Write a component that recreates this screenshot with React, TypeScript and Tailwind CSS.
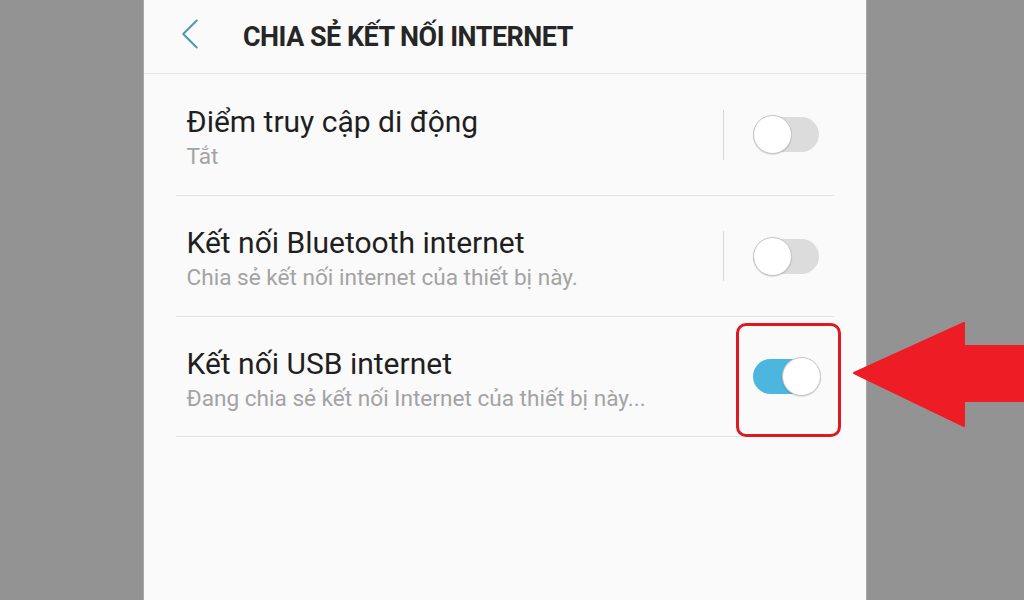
import { ChevronLeft } from "lucide-react";

interface TetherOption {
  id: string;
  title: string;
  subtitle: string;
  enabled: boolean;
  divider: boolean;
  height: string;
  highlighted?: boolean;
}

const options: TetherOption[] = [
  {
    id: "hotspot",
    title: "Điểm truy cập di động",
    subtitle: "Tắt",
    enabled: false,
    divider: true,
    height: "h-[122px]",
  },
  {
    id: "bluetooth",
    title: "Kết nối Bluetooth internet",
    subtitle: "Chia sẻ kết nối internet của thiết bị này.",
    enabled: false,
    divider: true,
    height: "h-[121px]",
  },
  {
    id: "usb",
    title: "Kết nối USB internet",
    subtitle: "Đang chia sẻ kết nối Internet của thiết bị này...",
    enabled: true,
    divider: false,
    height: "h-[120px]",
    highlighted: true,
  },
];

function Toggle({ on }: { on: boolean }) {
  return (
    <div className="relative w-[66px] h-[35px]">
      <div
        className={`absolute inset-0 rounded-full ${
          on ? "bg-[#4cb6de]" : "bg-[#dcdcdc]"
        }`}
      />
      <div
        className={`absolute top-[-2px] w-[39px] h-[39px] rounded-full bg-white border border-[#c4c4c4] shadow-[0_1px_1px_rgba(0,0,0,0.12)] ${
          on ? "left-[29px]" : "left-0"
        }`}
      />
    </div>
  );
}

export default function App() {
  return (
    <div
      className="w-[1024px] h-[600px] bg-[#939393] flex justify-center overflow-hidden relative"
      style={{ fontFamily: "Roboto, 'Noto Sans', sans-serif" }}
    >
      <div className="ml-[-15px] w-[724px] h-full bg-[#fafafa] border-x border-[#a8a8a8] flex flex-col">
        {/* Header */}
        <div className="h-[74px] flex items-center border-b border-[#e6e6e6] shrink-0">
          <ChevronLeft
            className="ml-[19px] mt-[-6px] w-[54px] h-[54px] text-[#4a9cb2]"
            strokeWidth={0.9}
          />
          <h1 className="ml-[26px] text-[28px] font-bold text-[#262626] tracking-[-0.5px] scale-x-[0.96] origin-left whitespace-nowrap">
            CHIA SẺ KẾT NỐI INTERNET
          </h1>
        </div>

        {/* Options */}
        <div className="px-[32px]">
          {options.map((option) => (
            <div
              key={option.id}
              className={`${option.height} flex items-center border-b border-[#e4e4e4]`}
            >
              <div className="flex-1 pl-[11px] pt-[6px]">
                <p className="text-[30px] leading-[36px] text-[#1f1f1f] whitespace-nowrap">
                  {option.title}
                </p>
                <p className="text-[22.6px] leading-[30px] text-[#a3a3a3] mt-[2px] whitespace-nowrap">
                  {option.subtitle}
                </p>
              </div>
              {option.divider ? (
                <div className="w-px h-[50px] bg-[#d9d9d9] mr-[29px]" />
              ) : (
                <div className="w-px h-[50px] mr-[29px]" />
              )}
              <div className="relative mr-[15px]">
                <Toggle on={option.enabled} />
                {option.highlighted && (
                  <div className="absolute left-[-17px] top-[-36px] w-[105px] h-[114px] border-[3px] border-[#dc1a22] rounded-[10px]" />
                )}
              </div>
            </div>
          ))}
        </div>
      </div>

      {/* Red arrow annotation */}
      <svg
        className="absolute left-[853px] top-[322px]"
        width="171"
        height="105"
        viewBox="0 0 171 105"
      >
        <path
          d="M1 51 L111 1 L111 24 L171 24 L171 79 L111 79 L111 104 Z"
          fill="#ee1c25"
          stroke="#ee1c25"
          strokeWidth="2"
          strokeLinejoin="round"
        />
      </svg>
    </div>
  );
}
